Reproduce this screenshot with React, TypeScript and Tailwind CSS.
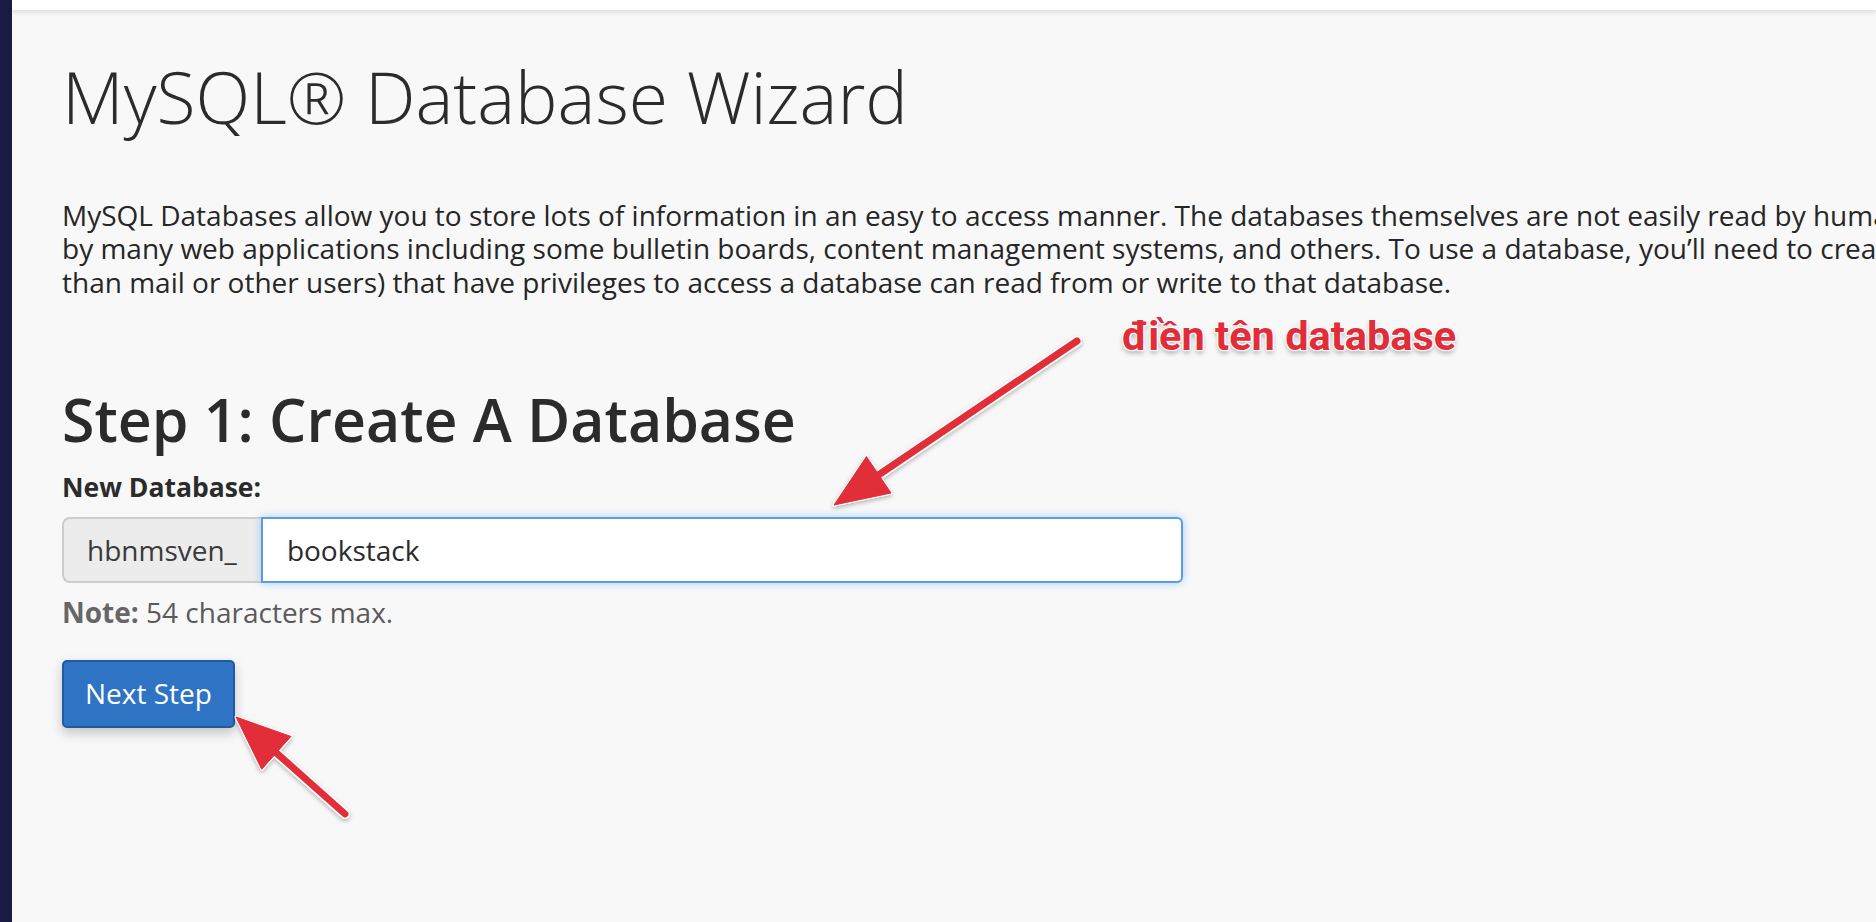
import React from "react";

type Pt = { x1: number; y1: number; x2: number; y2: number };

// Callout arrow: rounded shaft from (x1,y1) ending in a triangular head at (x2,y2)
function Arrow({ x1, y1, x2, y2 }: Pt) {
  const dx = x2 - x1;
  const dy = y2 - y1;
  const len = Math.hypot(dx, dy);
  const ux = dx / len;
  const uy = dy / len;
  const nx = -uy;
  const ny = ux;
  const H = 54;
  const W = 22;
  const bx = x2 - ux * H;
  const by = y2 - uy * H;
  const head = `${x2},${y2} ${bx + nx * W},${by + ny * W} ${bx - nx * W},${by - ny * W}`;
  const sx = bx + ux * 8;
  const sy = by + uy * 8;
  return (
    <g filter="url(#callout-shadow)">
      <line x1={x1} y1={y1} x2={sx} y2={sy} stroke="#ffffff" strokeWidth={10} strokeLinecap="round" />
      <polygon points={head} fill="#ffffff" stroke="#ffffff" strokeWidth={3} strokeLinejoin="round" />
      <line x1={x1} y1={y1} x2={sx} y2={sy} stroke="#e12d39" strokeWidth={7} strokeLinecap="round" />
      <polygon points={head} fill="#e12d39" stroke="#e12d39" strokeWidth={1} strokeLinejoin="round" />
    </g>
  );
}

const paragraph = [
  "MySQL Databases allow you to store lots of information in an easy to access manner. The databases themselves are not easily read by humans. MySQL databases are required",
  "by many web applications including some bulletin boards, content management systems, and others. To use a database, you\u2019ll need to create it. Only MySQL Users (different",
  "than mail or other users) that have privileges to access a database can read from or write to that database.",
];

export default function App() {
  return (
    <div className="relative flex h-[922px] w-full overflow-hidden bg-[#f8f8f8] [font-family:'Open_Sans',sans-serif] text-[#2b2b2b]">
      <aside className="w-[12px] shrink-0 bg-[#1b1a44]" />
      <main className="flex min-w-0 flex-1 flex-col">
        <header className="relative z-10 h-[10px] shrink-0 bg-white shadow-[0_2px_5px_rgba(0,0,0,0.13)]" />
        <section className="flex flex-col pl-[50px] pt-[44px]">
          <h1 className="text-[71.5px] font-light leading-[1.2] text-[#2b2b2b]">MySQL® Database Wizard</h1>
          <p className="mt-[59px] text-[28px] leading-[1.2] text-[#262626]">
            {paragraph.map((line) => (
              <span key={line} className="block whitespace-nowrap">
                {line}
              </span>
            ))}
          </p>
          <h2 className="mt-[84px] text-[59px] font-semibold leading-[1.2] text-[#2b2b2b]">Step 1: Create A Database</h2>
          <label className="mt-[18px] text-[26.5px] font-bold leading-[1.2] text-[#2b2b2b]">New Database:</label>
          <div className="mt-[13px] flex h-[66px] w-[1121px]">
            <span className="flex items-center rounded-l-[8px] border-2 border-r-0 border-[#cdcdcd] bg-[#ececec] pl-[23px] pr-[24px] text-[28px] text-[#3a3a3a]">
              hbnmsven_
            </span>
            <div className="flex flex-1 items-center rounded-r-[6px] border-2 border-[#5b9de3] bg-white pl-[24px] text-[28px] text-[#2b2b2b] shadow-[0_0_9px_rgba(102,170,235,0.55)]">
              bookstack
            </div>
          </div>
          <p className="mt-[13px] text-[28px] leading-[1.2] text-[#5a5a5a]">
            <span className="font-bold text-[#666666]">Note:</span> 54 characters max.
          </p>
          <div className="mt-[30px]">
            <button className="h-[68px] rounded-[5px] border-2 border-[#1f5ba4] bg-[#2f74c4] px-[21px] text-[28px] leading-[1.2] text-white shadow-[0_5px_12px_rgba(0,0,0,0.22)]">
              Next Step
            </button>
          </div>
        </section>
      </main>

      {/* annotation layer */}
      <svg className="pointer-events-none absolute inset-0 h-full w-full" width={1876} height={922}>
        <defs>
          <filter id="callout-shadow" x="-20%" y="-20%" width="140%" height="140%">
            <feDropShadow dx="0" dy="2" stdDeviation="2" floodColor="#000000" floodOpacity="0.28" />
          </filter>
        </defs>
        <Arrow x1={1077} y1={341} x2={834} y2={505} />
        <Arrow x1={345} y1={814} x2={236} y2={717} />
      </svg>
      <div className="pointer-events-none absolute left-[1122px] top-[311px] whitespace-nowrap [font-family:Roboto,'Liberation_Sans',sans-serif] text-[41.5px] font-bold leading-[1.2] text-[#e12d39] [text-shadow:0_0_2px_#fff,0_0_2px_#fff,1px_1px_1px_#fff,-1px_-1px_1px_#fff,1px_-1px_1px_#fff,-1px_1px_1px_#fff,0_3px_5px_rgba(0,0,0,0.35)]">
        điền tên database
      </div>
    </div>
  );
}
